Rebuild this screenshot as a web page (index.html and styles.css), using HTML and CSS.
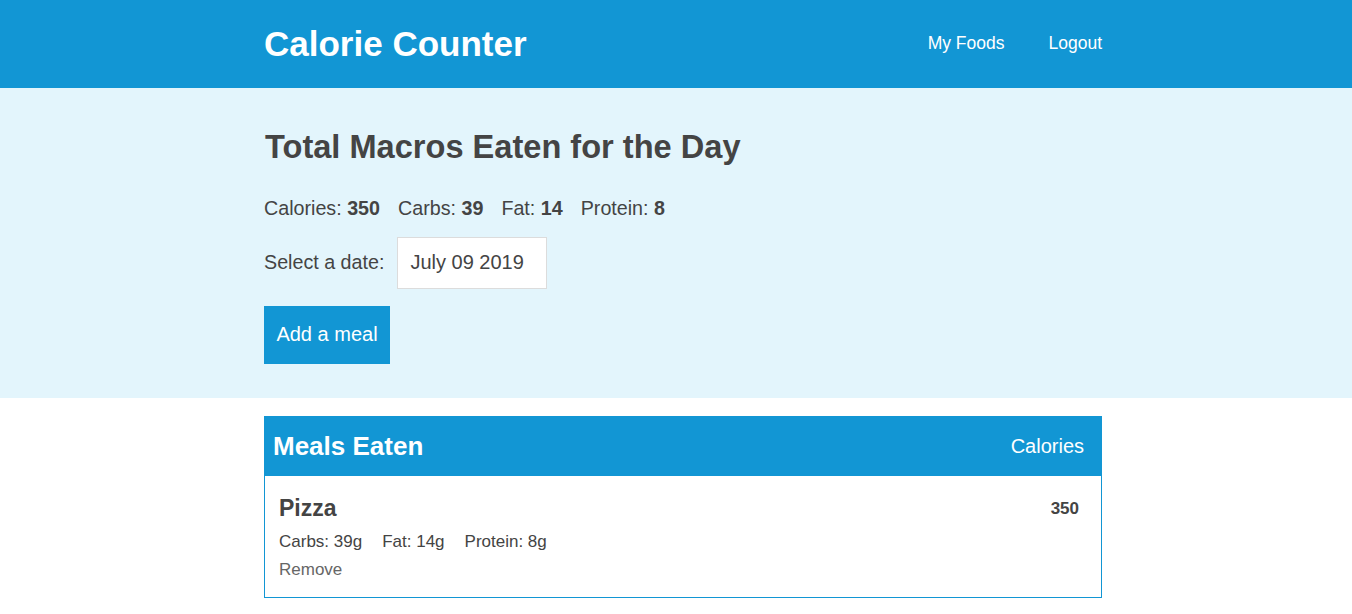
FILE: index.html
```html
<!DOCTYPE html>
<html lang="en">
<head>
<meta charset="utf-8">
<title>Calorie Counter</title>
<link rel="stylesheet" href="styles.css">
</head>
<body>
<header class="topbar">
  <div class="container topbar-inner">
    <h1 class="brand">Calorie Counter</h1>
    <nav class="nav">
      <a class="nav-link" href="#">My Foods</a>
      <a class="nav-link" href="#">Logout</a>
    </nav>
  </div>
</header>
<section class="hero">
  <div class="container">
    <h2 class="hero-title">Total Macros Eaten for the Day</h2>
    <div class="totals">
      <span>Calories: <b>350</b></span>
      <span>Carbs: <b>39</b></span>
      <span>Fat: <b>14</b></span>
      <span>Protein: <b>8</b></span>
    </div>
    <div class="date-row">
      <label class="date-label" for="date">Select a date:</label>
      <input class="date-input" id="date" type="text" value="July 09 2019">
    </div>
    <button class="btn">Add a meal</button>
  </div>
</section>
<main class="container">
  <div class="card">
    <div class="card-head">
      <h3 class="card-title">Meals Eaten</h3>
      <span class="card-col">Calories</span>
    </div>
    <div class="meal">
      <div class="meal-info">
        <div class="meal-name">Pizza</div>
        <div class="meal-macros">
          <span>Carbs: 39g</span>
          <span>Fat: 14g</span>
          <span>Protein: 8g</span>
        </div>
        <a class="remove" href="#">Remove</a>
      </div>
      <div class="meal-cal">350</div>
    </div>
  </div>
</main>
</body>
</html>
```
FILE: styles.css
```css
* { box-sizing: border-box; }
body {
  margin: 0;
  font-family: "Liberation Sans", Arial, sans-serif;
  color: #444;
  background: #fff;
}
.container {
  width: 838px;
  margin-left: 264px;
}
.topbar {
  background: #1296d4;
  height: 88px;
}
.topbar-inner {
  height: 88px;
  display: flex;
  align-items: center;
  justify-content: space-between;
}
.brand {
  margin: 0;
  color: #fff;
  font-size: 35px;
  font-weight: bold;
  line-height: 1;
  position: relative;
  top: -1px;
}
.nav {
  display: flex;
  gap: 44px;
  position: relative;
  top: -1px;
}
.nav-link {
  color: #fff;
  text-decoration: none;
  font-size: 17.5px;
}
.hero {
  background: #e3f5fc;
  padding: 43px 0 34px;
}
.hero-title {
  margin: 0 0 33px;
  font-size: 32.6px;
  line-height: 1;
  font-weight: bold;
  padding-left: 1px;
}
.totals {
  display: flex;
  gap: 18px;
  font-size: 19.7px;
  line-height: 23px;
  margin-bottom: 17px;
}
.date-row {
  display: flex;
  align-items: center;
  gap: 13px;
  margin-bottom: 17px;
}
.date-label {
  font-size: 19.7px;
}
.date-input {
  width: 150px;
  height: 52px;
  border: 1px solid #dcdcdc;
  background: #fff;
  font-family: inherit;
  font-size: 20px;
  color: #444;
  padding: 0 12px;
}
.btn {
  display: block;
  background: #1296d4;
  color: #fff;
  border: none;
  font-family: inherit;
  font-size: 20px;
  width: 126px;
  height: 58px;
  padding: 0;
}
main.container {
  padding-top: 18px;
}
.card {
  border: 1px solid #1296d4;
}
.card-head {
  background: #1296d4;
  height: 59px;
  display: flex;
  align-items: center;
  justify-content: space-between;
  padding: 0 17px 0 8px;
  color: #fff;
}
.card-title {
  margin: 0;
  font-size: 26px;
  font-weight: bold;
}
.card-col {
  font-size: 20px;
}
.meal {
  display: flex;
  justify-content: space-between;
  padding: 19px 22px 17px 14px;
}
.meal-name {
  font-size: 23px;
  font-weight: bold;
  line-height: 26px;
  margin-bottom: 11px;
}
.meal-macros {
  display: flex;
  gap: 20px;
  font-size: 17px;
  line-height: 20px;
  margin-bottom: 8px;
}
.remove {
  color: #666;
  font-size: 17px;
  text-decoration: none;
  line-height: 20px;
}
.meal-cal {
  font-size: 17px;
  font-weight: bold;
  padding-top: 4px;
}
```
